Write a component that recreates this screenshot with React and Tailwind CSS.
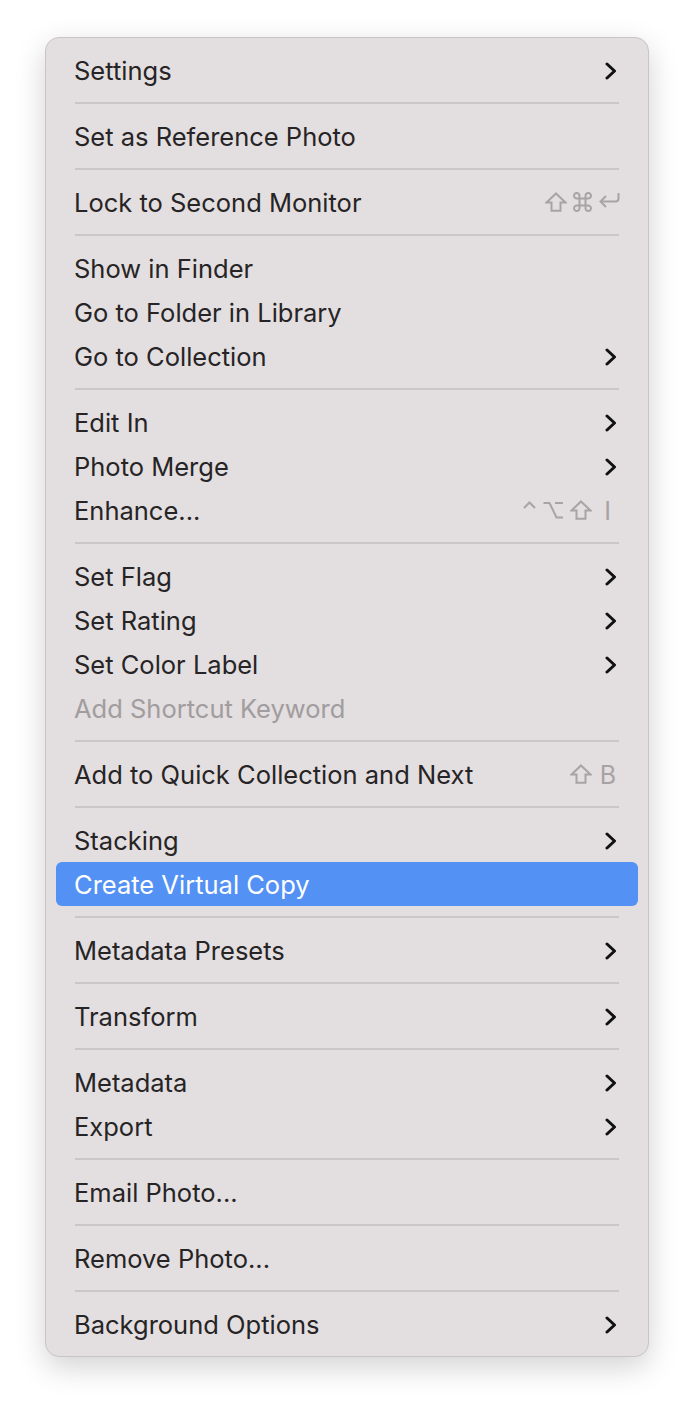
import React from 'react';

const groups = [
  [{ label: 'Settings', sub: true }],
  [{ label: 'Set as Reference Photo' }],
  [{ label: 'Lock to Second Monitor', keys: ['shift', 'cmd', 'return'] }],
  [
    { label: 'Show in Finder' },
    { label: 'Go to Folder in Library' },
    { label: 'Go to Collection', sub: true },
  ],
  [
    { label: 'Edit In', sub: true },
    { label: 'Photo Merge', sub: true },
    { label: 'Enhance...', keys: ['ctrl', 'opt', 'shift', 'I'] },
  ],
  [
    { label: 'Set Flag', sub: true },
    { label: 'Set Rating', sub: true },
    { label: 'Set Color Label', sub: true },
    { label: 'Add Shortcut Keyword', disabled: true },
  ],
  [{ label: 'Add to Quick Collection and Next', keys: ['shift', 'B'] }],
  [
    { label: 'Stacking', sub: true },
    { label: 'Create Virtual Copy', active: true },
  ],
  [{ label: 'Metadata Presets', sub: true }],
  [{ label: 'Transform', sub: true }],
  [
    { label: 'Metadata', sub: true },
    { label: 'Export', sub: true },
  ],
  [{ label: 'Email Photo...' }],
  [{ label: 'Remove Photo...' }],
  [{ label: 'Background Options', sub: true }],
];

const keyStroke = { fill: 'none', stroke: '#a8a3a5', strokeWidth: 2 };

function Key({ k }) {
  if (k === 'shift')
    return (
      <svg width="22" height="20" viewBox="0 0 22 20">
        <path d="M11 1.5 L20.5 10.5 H15.5 V18.8 H6.5 V10.5 H1.5 Z" {...keyStroke} strokeLinejoin="miter" />
      </svg>
    );
  if (k === 'cmd')
    return (
      <svg width="23" height="20" viewBox="0 0 23 20">
        <path
          d="M8.5 6.5 V13.5 M14.5 6.5 V13.5 M8.5 6.5 H14.5 M8.5 13.5 H14.5 M8.5 6.5 H6 A2.75 2.75 0 1 1 8.5 3.75 V6.5 M14.5 6.5 V3.75 A2.75 2.75 0 1 1 17 6.5 H14.5 M14.5 13.5 H17 A2.75 2.75 0 1 1 14.5 16.25 V13.5 M8.5 13.5 V16.25 A2.75 2.75 0 1 1 6 13.5 H8.5"
          {...keyStroke}
        />
      </svg>
    );
  if (k === 'return')
    return (
      <svg width="22" height="20" viewBox="0 0 22 20">
        <path d="M20.5 1 V6.5 Q20.5 9.5 17.5 9.5 H3" {...keyStroke} />
        <polyline points="8,4 2.5,9.5 8,15" {...keyStroke} />
      </svg>
    );
  if (k === 'opt')
    return (
      <svg width="20" height="18" viewBox="0 0 20 18">
        <path d="M0.5 2 H6.5 L13.5 16.5 H20 M12 2 H20" {...keyStroke} />
      </svg>
    );
  if (k === 'ctrl')
    return (
      <svg width="13" height="18" viewBox="0 0 13 18">
        <polyline points="1,7 6.5,1.5 12,7" {...keyStroke} />
      </svg>
    );
  return (
    <span className="pt-[2px] text-[25px] leading-[30px] text-[#a7a2a4]">{k}</span>
  );
}

function Chevron() {
  return (
    <svg width="12" height="18" viewBox="0 0 12 18" className="mt-[2px] shrink-0">
      <polyline
        points="2,2 9.5,9 2,16"
        fill="none"
        stroke="#111"
        strokeWidth="3"
        strokeLinecap="round"
        strokeLinejoin="round"
      />
    </svg>
  );
}

function Item({ item }) {
  const text = item.active
    ? 'text-white'
    : item.disabled
      ? 'text-[#a19c9e]'
      : 'text-[#262425]';
  const last = item.keys ? item.keys[item.keys.length - 1] : null;
  const pr = item.sub
    ? 'pr-[21px]'
    : last === 'I'
      ? 'pr-[27px]'
      : last === 'B'
        ? 'pr-[22px]'
        : 'pr-[18px]';
  return (
    <div
      className={`mx-[10px] flex h-[44px] items-center justify-between rounded-[6px] pl-[18px] ${
        item.active ? 'bg-[#5391f4]' : ''
      } ${pr}`}
    >
      <span className={`pt-[2px] text-[25.5px] leading-[30px] ${text}`}>{item.label}</span>
      {item.sub && <Chevron />}
      {item.keys && (
        <span className="flex items-center">
          {item.keys.map((k, i) => (
            <span
              key={i}
              className={`flex items-center ${
                i === 0 ? '' : k === 'I' ? 'ml-[12px]' : k === 'B' ? 'ml-[8px]' : k === 'opt' || (k === 'shift' && item.keys[0] === 'ctrl') ? 'ml-[7px]' : 'ml-[4px]'
              }`}
            >
              <Key k={k} />
            </span>
          ))}
        </span>
      )}
    </div>
  );
}

export default function App() {
  return (
    <div className="min-h-screen bg-white pt-[37px] pl-[45px]" style={{ fontFamily: 'Inter, "Noto Sans", sans-serif' }}>
      <div className="w-[604px] rounded-[14px] border border-[#c9c5c7] bg-[#e3dedf] py-[10px] shadow-[0_10px_30px_rgba(0,0,0,0.18)]">
        {groups.map((g, gi) => (
          <div key={gi}>
            {gi > 0 && (
              <div className="flex h-[22px] items-center px-[29px]">
                <div className="h-[2px] w-full bg-[#cbc6c8]" />
              </div>
            )}
            {g.map((item) => (
              <Item key={item.label} item={item} />
            ))}
          </div>
        ))}
      </div>
    </div>
  );
}
